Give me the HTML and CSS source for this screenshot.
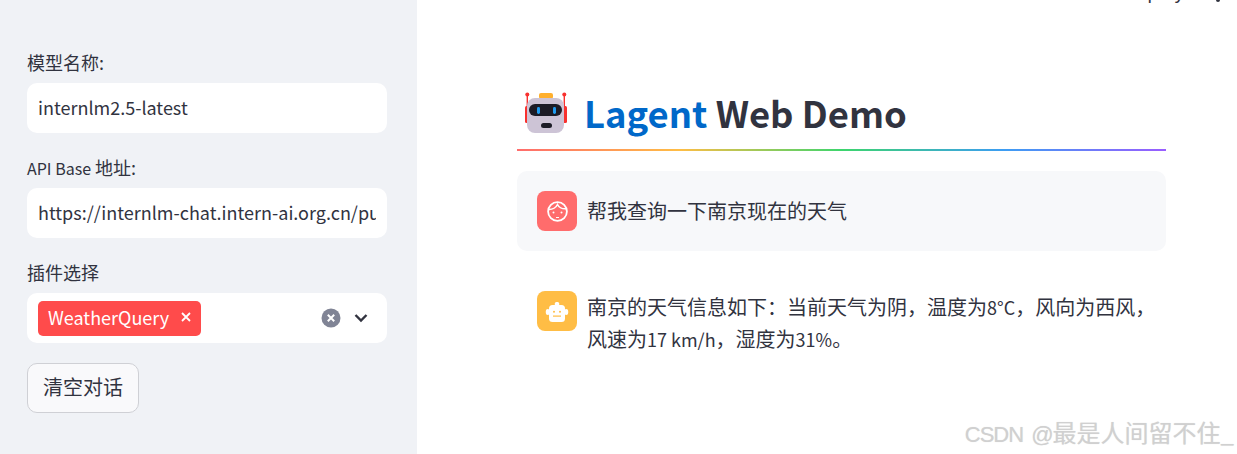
FILE: index.html
```html
<!doctype html>
<html lang="en">
<head>
    <meta charset="UTF-8">
    <title>Lagent Web Demo</title>
    <link rel="stylesheet" href="styles.css">
</head>
<body>
    <div id="wrapper">
        <aside id="sidebar">
            <div class="field">
                <label class="field_label">模型名称:</label>
                <div class="input_box"><span class="input_text">internlm2.5-latest</span></div>
            </div>
            <div class="field">
                <label class="field_label"><span class="label_latin">API Base</span> 地址:</label>
                <div class="input_box"><span class="input_text">https://internlm-chat.intern-ai.org.cn/puyu/api/v1/chat/completions</span></div>
            </div>
            <div class="field">
                <label class="field_label">插件选择</label>
                <div class="input_box select_box">
                    <span class="tag">WeatherQuery
                        <svg class="tag_close" viewBox="0 0 10 10" width="10" height="10"><path d="M1 1L9 9M9 1L1 9" stroke="#fff" stroke-width="1.8" fill="none"/></svg>
                    </span>
                    <span class="select_icons">
                        <svg viewBox="0 0 20 20" width="20" height="20"><circle cx="10" cy="10" r="9.5" fill="#808495"/><path d="M6.8 6.8L13.2 13.2M13.2 6.8L6.8 13.2" stroke="#fff" stroke-width="2" fill="none"/></svg>
                        <svg viewBox="0 0 14 10" width="14" height="10"><path d="M1.5 2L7 7.5L12.5 2" stroke="#31333f" stroke-width="2.4" fill="none"/></svg>
                    </span>
                </div>
            </div>
            <button type="button" id="clear_button">清空对话</button>
        </aside>

        <main id="main">
            <div id="deploy">Deploy</div>
            <div id="menu_dot"></div>
            <h1 id="title">
                <svg class="title_icon" viewBox="0 0 44 44" width="44" height="44">
                    <rect x="16" y="2" width="14" height="6" rx="2" fill="#ffb02e"/>
                    <path d="M4.3 3.5V16M41.3 3.5V16" stroke="#f8312f" stroke-width="1.4" fill="none"/>
                    <circle cx="4.3" cy="3.5" r="2" fill="#f8312f"/>
                    <circle cx="41.3" cy="3.5" r="2" fill="#f8312f"/>
                    <rect x="2" y="15" width="4" height="17" rx="1.5" fill="#f8312f"/>
                    <rect x="40" y="15" width="4" height="17" rx="1.5" fill="#f8312f"/>
                    <rect x="4" y="7" width="37" height="35" rx="8" fill="#cdc4d6"/>
                    <rect x="6" y="13" width="33" height="12" rx="6" fill="#1c1c26"/>
                    <rect x="14" y="16" width="3" height="7" rx="1.4" fill="#1f9cf0"/>
                    <rect x="30" y="16" width="3" height="7" rx="1.4" fill="#1f9cf0"/>
                    <rect x="18" y="32" width="11" height="5" rx="2.5" fill="#1c1c26"/>
                </svg>
                <span class="title_text"><span class="title_blue">Lagent</span> Web Demo</span>
            </h1>
            <hr id="rainbow">
            <div class="message user_message">
                <div class="avatar avatar_user">
                    <svg viewBox="0 0 24 24" width="24" height="24" fill="none" stroke="#fff">
                        <circle cx="12.5" cy="12.5" r="9.4" stroke-width="1.8"/>
                        <path d="M3.8 10.5C8 10.5 11 8.5 12.5 5.5C14 8.5 17 10 21 9.8" stroke-width="1.6"/>
                        <circle cx="8.5" cy="13.5" r="1" fill="#fff" stroke="none"/>
                        <circle cx="16.5" cy="13.5" r="1" fill="#fff" stroke="none"/>
                        <path d="M11 18.5H14" stroke-width="1"/>
                    </svg>
                </div>
                <p class="message_text">帮我查询一下南京现在的天气</p>
            </div>
            <div class="message bot_message">
                <div class="avatar avatar_bot">
                    <svg viewBox="0 0 24 24" width="24" height="24">
                        <rect x="9.8" y="3" width="4.4" height="4" rx="1.5" fill="#fff"/>
                        <rect x="4" y="6" width="16" height="17" rx="3.5" fill="#fff"/>
                        <rect x="0.8" y="10" width="4" height="6" rx="2" fill="#fff"/>
                        <rect x="19.2" y="10" width="4" height="6" rx="2" fill="#fff"/>
                        <circle cx="9" cy="12.8" r="1" fill="#ffbd45"/>
                        <circle cx="15" cy="12.8" r="1" fill="#ffbd45"/>
                        <rect x="8" y="16.5" width="8" height="1.2" fill="#ffbd45"/>
                    </svg>
                </div>
                <p class="message_text">南京的天气信息如下：当前天气为阴，温度为<span class="msg_latin">8°C</span>，风向为西风，风速为<span class="msg_latin">17 km/h</span>，湿度为<span class="msg_latin">31%</span>。</p>
            </div>
            <div id="watermark"><span class="wm_latin">CSDN @</span>最是人间留不住_</div>
        </main>
    </div>
</body>
</html>
```

FILE: styles.css
```css
body {
    margin: 0;
    padding: 0;
    font-family: "Noto Sans CJK SC", "Noto Sans", sans-serif;
    color: #31333f;
    background: #fff;
}

#wrapper {
    display: flex;
    height: 454px;
    overflow: hidden;
}

#sidebar {
    box-sizing: border-box;
    width: 417px;
    flex-shrink: 0;
    padding: 48px 30px 0 27px;
    background: #f0f2f6;
    display: flex;
    flex-direction: column;
    gap: 20px;
}

.field {
    display: flex;
    flex-direction: column;
    gap: 7px;
}

.field_label {
    height: 28px;
    font-size: 18px;
    line-height: 28px;
}

.label_latin {
    font-size: 16px;
}

.input_box {
    box-sizing: border-box;
    height: 50px;
    padding: 0 11px;
    background: #fff;
    border-radius: 10px;
    display: flex;
    align-items: center;
    font-size: 18px;
}

.input_text {
    min-width: 0;
    padding-bottom: 2px;
    white-space: nowrap;
    overflow: hidden;
}

.select_box {
    justify-content: space-between;
}

.tag {
    box-sizing: border-box;
    height: 35px;
    padding: 0 10px 2px;
    background: #ff4b4b;
    color: #fff;
    border-radius: 5px;
    display: flex;
    align-items: center;
    gap: 12px;
}

.select_icons {
    display: flex;
    align-items: center;
    gap: 13px;
    margin-right: 8px;
}

#clear_button {
    box-sizing: border-box;
    align-self: flex-start;
    width: 112px;
    height: 50px;
    margin: 0;
    padding: 0 0 3px;
    font-family: inherit;
    font-size: 20px;
    color: #31333f;
    background: #f9f9fb;
    border: 1px solid #cfd0d5;
    border-radius: 10px;
}

#main {
    position: relative;
    flex: 1;
    padding: 86px 71px 0 100px;
}

#deploy {
    position: absolute;
    top: -22px;
    left: 708px;
    font-size: 18px;
    line-height: 26px;
    color: #31333f;
}

#menu_dot {
    position: absolute;
    top: -2px;
    left: 799px;
    width: 4px;
    height: 4px;
    border-radius: 50%;
    background: #31333f;
}

#title {
    display: flex;
    align-items: center;
    gap: 17px;
    height: 52px;
    margin: 0 0 0 6px;
    font-size: 36.4px;
    font-weight: 700;
}

.title_icon {
    margin-top: 2px;
}

.title_blue {
    color: #0068c9;
}

#rainbow {
    height: 2px;
    margin: 11px 0 20px;
    border: none;
    background: linear-gradient(to right, #ff6c6c, #ffbd45, #3dd56d, #3d9df3, #9a5dff);
}

.message {
    box-sizing: border-box;
    display: flex;
    gap: 10px;
    padding: 20px 0 20px 20px;
    border-radius: 10px;
    margin-bottom: 20px;
}

.user_message {
    background: #f7f8fa;
    height: 80px;
    align-items: center;
}

.avatar {
    width: 40px;
    height: 40px;
    flex-shrink: 0;
    border-radius: 8px;
    display: flex;
    align-items: center;
    justify-content: center;
}

.avatar_user {
    background: #ff6c6c;
}

.avatar_bot {
    background: #ffbd45;
}

.message_text {
    margin: 0;
    font-size: 20px;
    line-height: 32px;
}

.msg_latin {
    font-size: 18px;
}

#watermark {
    position: absolute;
    right: 3px;
    bottom: 1px;
    font-size: 24px;
    line-height: 36px;
    color: #d0d0d0;
    white-space: nowrap;
    text-shadow: 0 0 1px #e0e0e0;
}

.wm_latin {
    font-family: "Liberation Sans", sans-serif;
    font-size: 22px;
    letter-spacing: -1px;
    word-spacing: 3px;
}
```
